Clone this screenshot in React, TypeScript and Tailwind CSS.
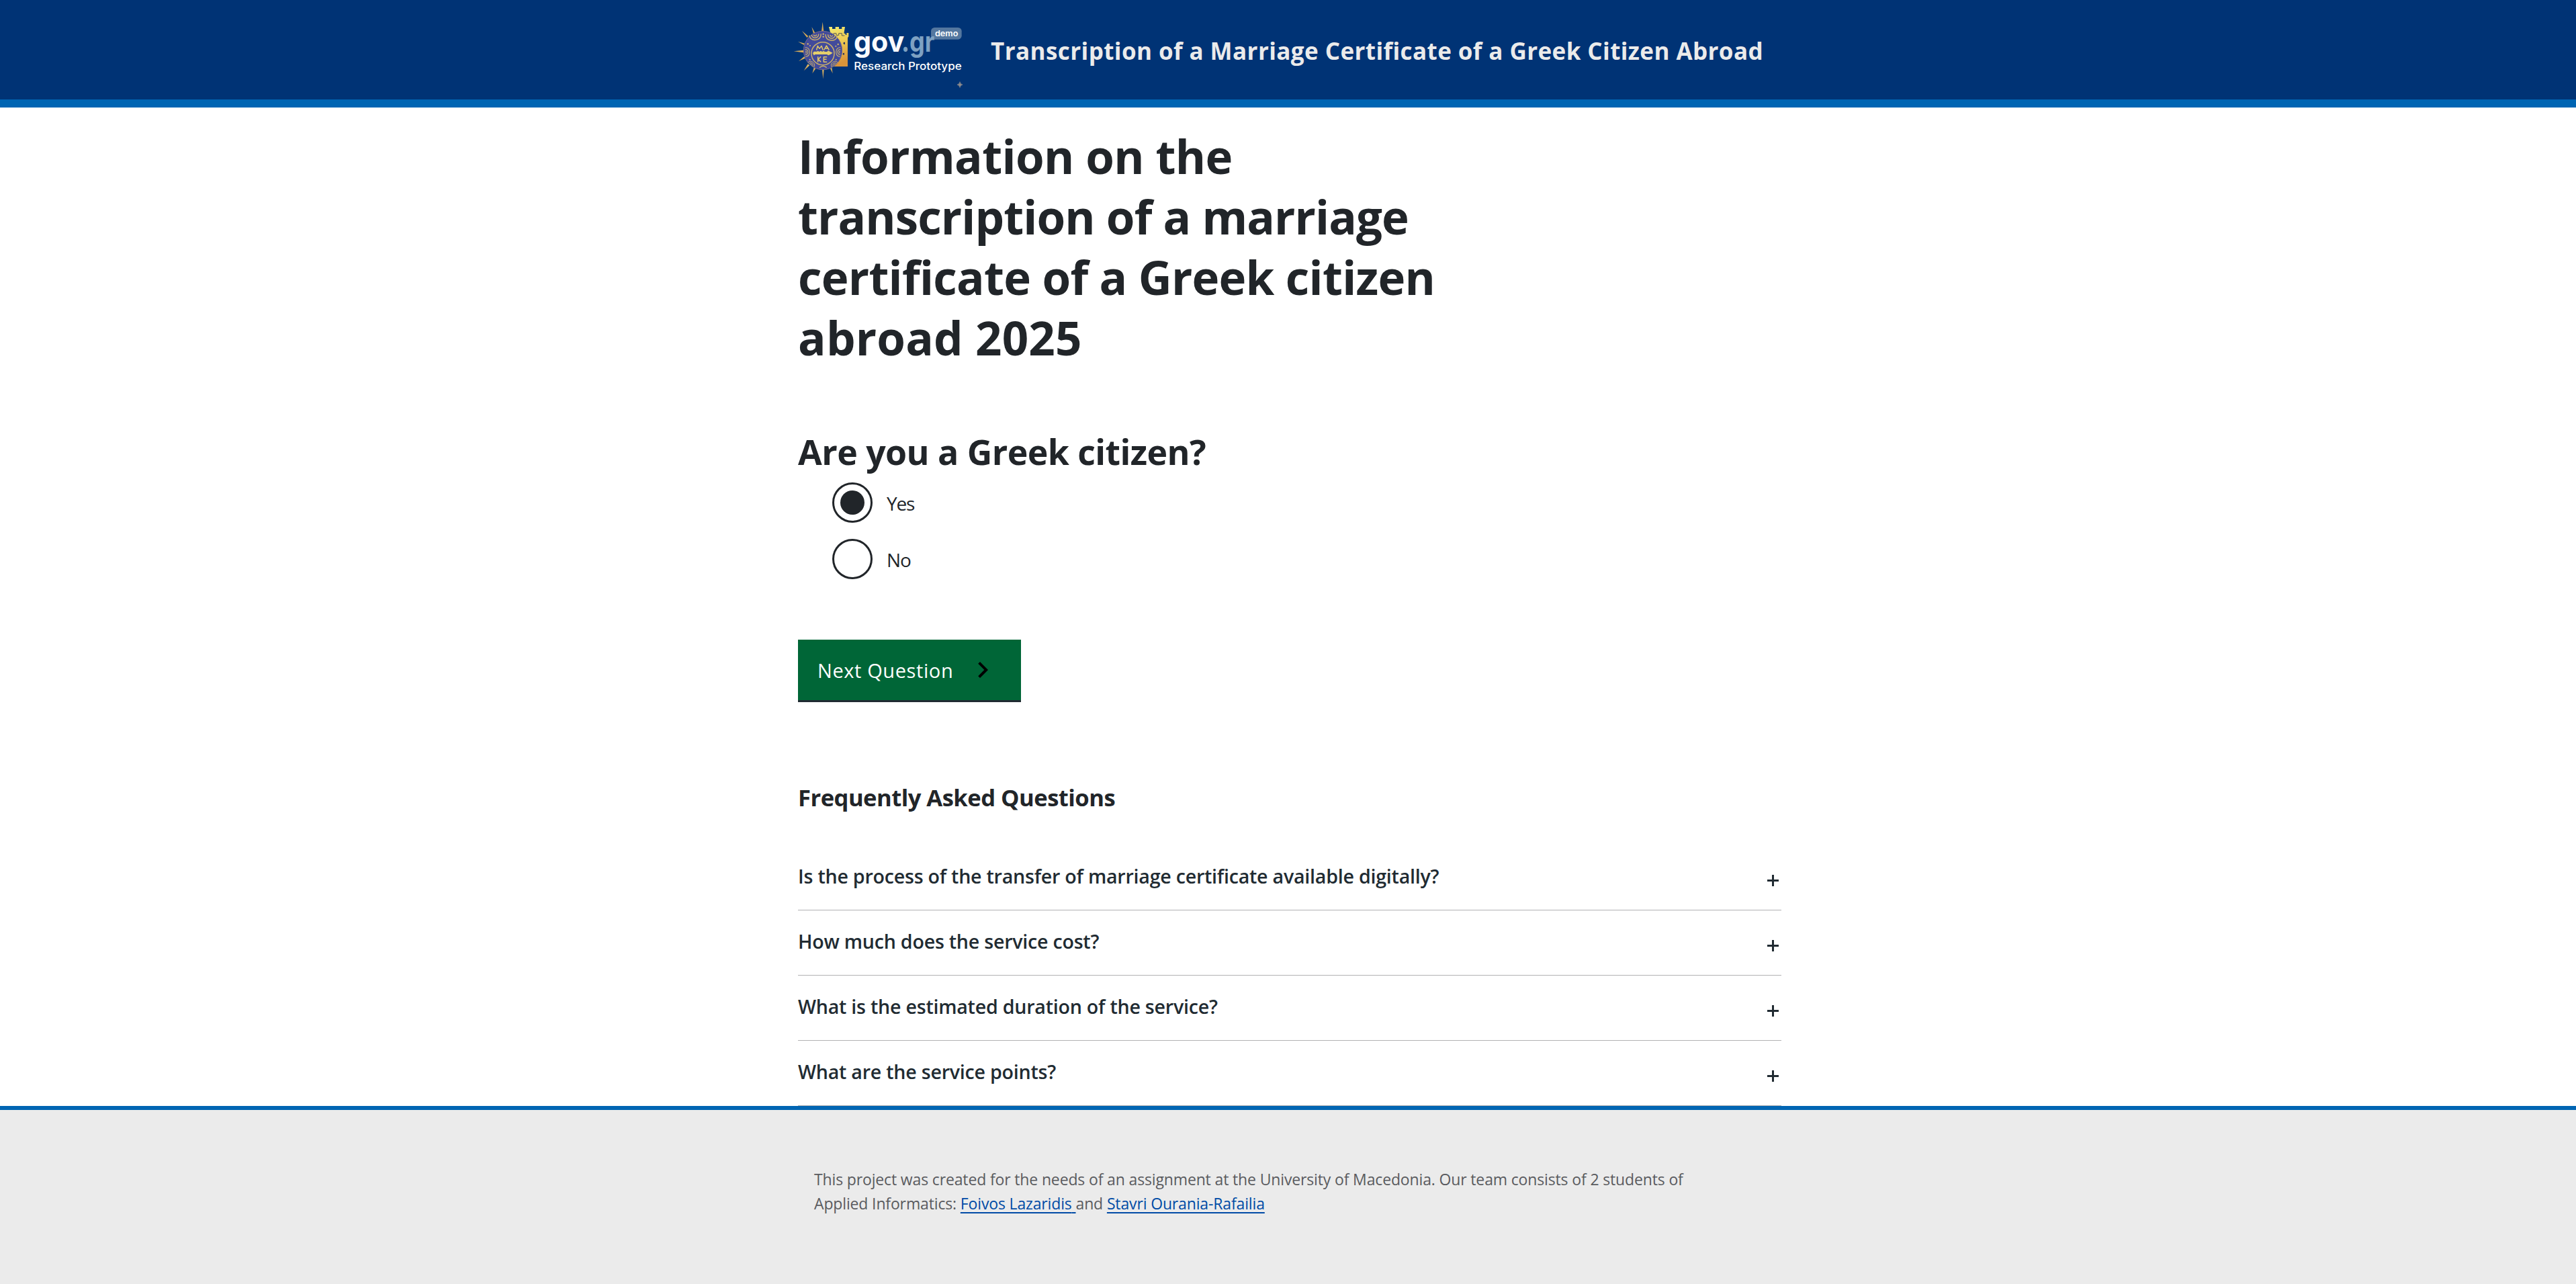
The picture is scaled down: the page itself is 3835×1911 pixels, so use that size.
import React from 'react';

function Spiral({ x, y, angle, scale }: { x: number; y: number; angle: number; scale: number }) {
  return (
    <g transform={`translate(${x} ${y}) rotate(${angle}) scale(${scale})`}>
      <path d="M-28 -12 Q-25 13 0 13 Q25 13 28 -12" />
      <path d="M-17 -13 Q-14 3 0 3 Q14 3 17 -13" />
      <path d="M-7 -12 Q-5 -6 0 -6 Q5 -6 7 -12" />
    </g>
  );
}

function Logo() {
  return (
    <svg className="mt-5 h-32 w-65 shrink-0" viewBox="30 0 780 384" role="img" aria-label="gov.gr Research Prototype">
      <defs>
        <linearGradient id="castle" x1="0" y1="0" x2="0.25" y2="1">
          <stop offset="0" stopColor="#f2ea72" />
          <stop offset="0.5" stopColor="#ecca52" />
          <stop offset="1" stopColor="#d9933a" />
        </linearGradient>
        <linearGradient id="gold" x1="0" y1="0" x2="0" y2="1">
          <stop offset="0" stopColor="#ddb765" />
          <stop offset="1" stopColor="#d3a04c" />
        </linearGradient>
      </defs>
      <path
        d="M192 60 h15 v9 h14 v-9 h16 v9 h13 v-9 h14 l-4 24 v6 h6 v6 h5 v-9 h9 v16 l-4 6 V237 H200 V100 l-2 -16 Z"
        fill="url(#castle)"
      />
      <path d="M203 88 v8 h10 v-7 h12 v8 h11 v-8 h14 v10 h12" fill="none" stroke="#5c5a55" strokeWidth="3" />
      <path d="M258 131 l4 -2 v8 l-4 -2 Z M255 180 l4 -3 v7 l-4 -2 Z" fill="#1d2d60" stroke="#1d2d60" strokeWidth="3" />
      <g fill="url(#gold)">
        <path d="M164 38 L169 80 H159 Z" />
        <path d="M166 293 L170 250 H162 Z" />
        <path d="M35 169 L78 164 V175 Z" />
        <path d="M115 60 L130 86 L123 90 Z" />
        <path d="M72 78 L100 102 L94 108 Z" />
        <path d="M54 126 L84 134 L81 141 Z" />
        <path d="M57 213 L82 192 L86 200 Z" />
        <path d="M80 256 L98 226 L106 232 Z" />
        <path d="M118 268 L125 242 L133 246 Z" />
        <path d="M209 268 L198 246 L205 242 Z" />
      </g>
      <circle cx="165" cy="165" r="86" fill="#424a9b" stroke="#75698a" strokeWidth="3" />
      <g fill="none" stroke="#c9b06a" strokeWidth="4.5">
        <circle cx="165" cy="179" r="51" />
        <Spiral x={132} y={106} angle={-8} scale={0.95} />
        <Spiral x={202} y={108} angle={8} scale={0.95} />
        <Spiral x={96} y={172} angle={-92} scale={0.75} />
        <Spiral x={234} y={172} angle={92} scale={0.75} />
        <Spiral x={116} y={224} angle={218} scale={0.6} />
        <Spiral x={214} y={224} angle={142} scale={0.6} />
        <path d="M150 242 Q166 228 182 242" />
      </g>
      <g fill="#d9bd68">
        <circle cx="167" cy="92" r="3.5" />
        <circle cx="167" cy="104" r="3.5" />
        <circle cx="98" cy="136" r="3.5" />
        <circle cx="108" cy="144" r="3" />
        <circle cx="233" cy="138" r="3.5" />
        <circle cx="223" cy="146" r="3" />
        <circle cx="107" cy="206" r="3" />
        <circle cx="224" cy="206" r="3" />
      </g>
      <path
        d="M120 178 l5 -8 h14 l4 -3 l6 4 l7 -4 l6 4 l6 -4 l6 4 h10 l4 -5 l12 6 l9 4 l-9 6 l-10 5 l-7 -4 h-52 l-6 4 Z"
        fill="#e5cf6c"
      />
      <g fill="none" stroke="#e0c66a" strokeWidth="4.5" strokeLinejoin="round" strokeLinecap="round">
        <path d="M137 162 L142 145 L150 157 L159 145 L165 162" />
        <path d="M171 162 L181 144 L192 162 M175 156 H188" />
        <path d="M143 194 V216 M155 194 L144 205 L155 215" />
        <path d="M182 194 H169 V217 H182 M169 205 H180" />
      </g>
      <rect x="648" y="63" width="137" height="53" rx="16" fill="#54779f" />
      <g className="font-['Inter']">
        <text x="303" y="170" textLength="226" lengthAdjust="spacingAndGlyphs" fontSize="128" fontWeight="700" fill="#fafbfd">
          gov
        </text>
        <text x="516" y="170" textLength="148" lengthAdjust="spacingAndGlyphs" fontSize="128" fontWeight="700" fill="#7ea1c2">
          .gr
        </text>
        <text x="666" y="101" textLength="103" lengthAdjust="spacingAndGlyphs" fontSize="34" fontWeight="600" fill="#ffffff">
          demo
        </text>
        <text x="304" y="251" textLength="481" lengthAdjust="spacingAndGlyphs" fontSize="47" fontWeight="500" fill="#ffffff">
          Research Prototype
        </text>
      </g>
      <path d="M777 305 Q779 316 789 318 Q779 320 777 331 Q775 320 765 318 Q775 316 777 305 Z" fill="#8d8b8c" stroke="#8d8b8c" strokeWidth="2" />
    </svg>
  );
}

function Radio({ label, checked = false }: { label: string; checked?: boolean }) {
  return (
    <label className="flex h-15 items-center gap-[21px]">
      <input type="radio" name="citizen" defaultChecked={checked} className="peer sr-only" />
      <span className="flex size-15 items-center justify-center rounded-full border-3 border-[#212529]">
        {checked && <span className="size-9 rounded-full bg-[#212529]" />}
      </span>
      <span className="pt-0.5 text-[28px] leading-12 tracking-[-1.2px]">{label}</span>
    </label>
  );
}

const questions = [
  'Is the process of the transfer of marriage certificate available digitally?',
  'How much does the service cost?',
  'What is the estimated duration of the service?',
  'What are the service points?',
];

export default function App() {
  return (
    <div className="flex h-[1911px] flex-col overflow-hidden bg-white font-['Open_Sans',sans-serif] text-[#212529]">
      <header className="flex h-40 shrink-0 border-b-12 border-[#0065b3] bg-[#003375] pl-[1180px]">
        <Logo />
        <p className="mt-[51px] ml-[35px] text-[35px] leading-[50px] font-bold tracking-[0.42px] whitespace-nowrap text-[#ebebeb]">
          Transcription of a Marriage Certificate of a Greek Citizen Abroad
        </p>
      </header>

      <main className="ml-[1188px] flex w-[1464px] shrink-0 flex-col pt-[27px]">
        <h1 className="text-[69px] leading-[90px] font-bold whitespace-nowrap">
          <span className="block tracking-[-0.6px]">Information on the</span>
          <span className="block tracking-[-0.88px]">transcription of a marriage</span>
          <span className="block tracking-[-0.73px]">certificate of a Greek citizen</span>
          <span className="block tracking-[0.2px]">abroad 2025</span>
        </h1>

        <h2 className="mt-[91px] text-[51.8px] leading-[68px] font-bold tracking-[-0.54px]">Are you a Greek citizen?</h2>
        <div className="mt-3 ml-[51px] flex flex-col gap-6">
          <Radio label="Yes" checked />
          <Radio label="No" />
        </div>

        <button className="mt-[90px] flex h-[93px] w-[332px] items-center border-b-3 border-[#212b32] bg-[#006637] pl-[29px] text-white">
          <span className="w-[222px] pt-0.5 text-left text-[29px] leading-10 tracking-[0.6px]">Next Question</span>
          <svg className="size-12" viewBox="0 0 24 24" fill="#000000">
            <path d="M10 6 8.59 7.41 13.17 12l-4.58 4.59L10 18l6-6z" />
          </svg>
        </button>

        <h3 className="mt-[117px] text-[34.6px] leading-[50px] font-bold tracking-[-0.52px]">Frequently Asked Questions</h3>
        <ul className="mt-[46px]">
          {questions.map((q) => (
            <li key={q} className="flex h-[97px] items-start justify-between border-b border-[#b1b1b3] pt-[26px] pr-1 text-[#212b32]">
              <span className="text-[28.6px] leading-10 font-semibold tracking-[-0.23px]">{q}</span>
              <svg className="mt-[18px] size-[17px]" viewBox="0 0 17 17" fill="currentColor">
                <path d="M7 0h3v7h7v3h-7v7H7v-7H0V7h7z" />
              </svg>
            </li>
          ))}
        </ul>
      </main>

      <footer className="flex-1 border-t-6 border-[#0065b3] bg-[#ebebeb] pt-[85px] pl-[1212px]">
        <p className="w-[1310px] text-[23px] leading-9 tracking-[-0.145px] text-[#5a5b5f]">
          This project was created for the needs of an assignment at the University of Macedonia. Our team consists of 2 students of
          Applied Informatics:{' '}
          <a href="#" className="text-[#004ba6] underline decoration-2 underline-offset-4">
            Foivos Lazaridis{' '}
          </a>
          and{' '}
          <a href="#" className="text-[#004ba6] underline decoration-2 underline-offset-4">
            Stavri Ourania-Rafailia
          </a>
        </p>
      </footer>
    </div>
  );
}
